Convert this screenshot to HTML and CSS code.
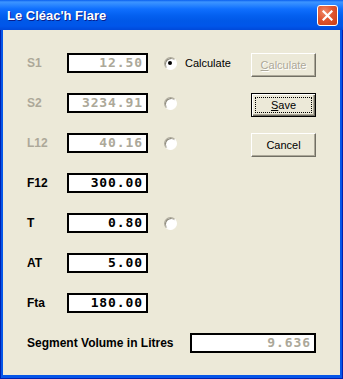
FILE: index.html
```html
<!doctype html>
<html>
 <head>
  <meta charset="utf-8">
  <title>Le Cléac'h Flare</title>
  <link rel="stylesheet" href="styles.css">
 </head>
 <body>
  <div class="window">
   <div class="titlebar">
    <span class="title">Le Cléac'h Flare</span>
    <span class="close">
     <svg width="11" height="11" viewBox="0 0 11 11"><path d="M1.5 1.5 L9.5 9.5 M9.5 1.5 L1.5 9.5" stroke="#fff" stroke-width="2.2" stroke-linecap="square"/></svg>
    </span>
   </div>

   <div class="client">
    <div class="top">
     <div class="fields">
      <div class="row">
       <span class="lbl off">S1</span><span class="box off">12.50</span>
       <span class="radio on"></span><span class="rlabel">Calculate</span>
      </div>
      <div class="row">
       <span class="lbl off">S2</span><span class="box off">3234.91</span>
       <span class="radio"></span>
      </div>
      <div class="row">
       <span class="lbl off">L12</span><span class="box off">40.16</span>
       <span class="radio"></span>
      </div>
      <div class="row">
       <span class="lbl">F12</span><span class="box">300.00</span>
      </div>
      <div class="row">
       <span class="lbl">T</span><span class="box">0.80</span>
       <span class="radio"></span>
      </div>
      <div class="row">
       <span class="lbl">AT</span><span class="box">5.00</span>
      </div>
      <div class="row">
       <span class="lbl">Fta</span><span class="box">180.00</span>
      </div>
     </div>

     <div class="buttons">
      <button class="btn" disabled><u>C</u>alculate</button>
      <button class="btn default"><span class="focus"><u>S</u>ave</span></button>
      <button class="btn">Cancel</button>
     </div>
    </div>

    <div class="row segment">
     <span class="seglbl">Segment Volume in Litres</span><span class="box wide off">9.636</span>
    </div>
   </div>
  </div>
 </body>
</html>
```

FILE: styles.css
```css
body { margin: 0; font-family: "Liberation Sans", Arial, sans-serif; font-size: 11px; }

.window { width: 343px; height: 379px; display: flex; flex-direction: column; background: #0556e8; box-shadow: inset 0 0 0 1px #0020b0; box-sizing: border-box; }

.titlebar { height: 30px; flex: none; display: flex; align-items: center; justify-content: space-between; padding: 0 5px 0 7px;
  background: linear-gradient(180deg, #0a5fee 0px, #3d95ff 2px, #2a86ff 5px, #0f6ffe 9px, #0461f1 15px, #0058e8 21px, #0056ea 26px, #0049da 30px); }
.title { color: #fff; font-weight: bold; font-size: 13px; text-shadow: 1px 1px 0 #0a1e8a; padding-top: 1px; }
.close { width: 19px; height: 19px; border: 1px solid #fff; border-radius: 3px; display: flex; align-items: center; justify-content: center;
  background: radial-gradient(circle at 35% 30%, #f08a6a 0%, #e0552f 45%, #c83c16 100%); }

.client { flex: 1; margin: 0 3px 4px; background: #ece9d8; padding: 23px 0 0 24px; }

.top { display: flex; }
.fields { width: 224px; display: flex; flex-direction: column; gap: 20px; }
.row { height: 20px; display: flex; align-items: center; }

.lbl { width: 40px; font-weight: bold; font-size: 12px; color: #000; }
.lbl.off { color: #aca899; }

.box { width: 81px; height: 20px; box-sizing: border-box; border: 2px solid #000; background: #fff; text-align: right; padding-right: 3px;
  font-family: "DejaVu Sans Mono", monospace; font-weight: bold; font-size: 13px; letter-spacing: 0.9px; line-height: 16px; color: #000; }
.box.off { color: #aca899; }
.box.wide { width: 126px; }

.radio { width: 13px; height: 13px; box-sizing: border-box; margin-left: 16px; border-radius: 50%; background: #fff; position: relative;
  border: 1px solid; border-color: #aca899 #fff #fff #aca899; box-shadow: inset 1px 1px 0 #8d8a7c; }
.radio.on::after { content: ""; position: absolute; left: 3px; top: 3px; width: 4px; height: 4px; border-radius: 50%; background: #000; }
.rlabel { margin-left: 8px; color: #000; }

.buttons { display: flex; flex-direction: column; gap: 16px; }
.btn { width: 65px; height: 24px; padding: 0; background: #ece9d8; font-family: "Liberation Sans", Arial, sans-serif; font-size: 11px; color: #000;
  border: 1px solid; border-color: #fff #716f64 #716f64 #fff; box-shadow: inset -1px -1px 0 #aca899; }
.btn[disabled] { color: #aca899; text-shadow: 1px 1px 0 #fff; }
.btn.default { border: 1px solid #000; box-shadow: inset 1px 1px 0 #fff, inset -1px -1px 0 #716f64, inset -2px -2px 0 #aca899; padding: 3px; }
.focus { display: flex; height: 100%; align-items: center; justify-content: center; border: 1px dotted #000; box-sizing: border-box; }

.segment { margin-top: 20px; }
.seglbl { width: 163px; font-weight: bold; font-size: 12px; color: #000; }
```
